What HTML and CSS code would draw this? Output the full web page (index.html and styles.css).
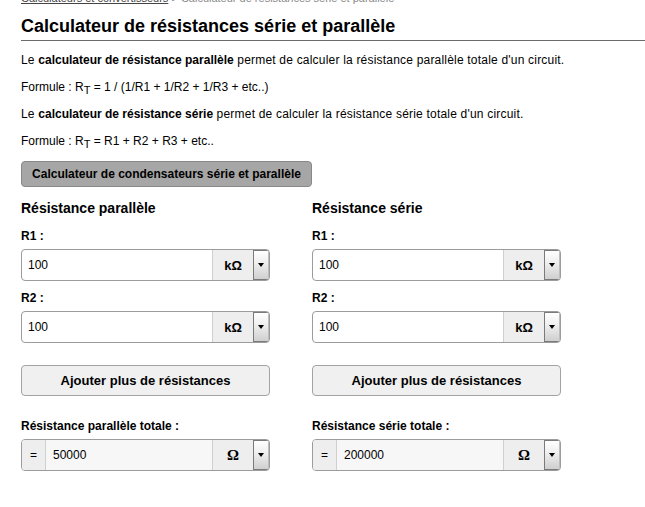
FILE: index.html
```html
<!DOCTYPE html>
<html lang="fr">
<head>
<meta charset="utf-8">
<title>Calculateur de résistances série et parallèle</title>
<link rel="stylesheet" href="styles.css">
</head>
<body>
<div class="page">
  <div class="crumbs"><a href="#">Calculateurs et convertisseurs</a> &gt; Calculateur de résistances série et parallèle</div>
  <h1>Calculateur de résistances série et parallèle</h1>
  <p class="desc">Le <b>calculateur de résistance parallèle</b> permet de calculer la résistance parallèle totale d'un circuit.</p>
  <p>Formule : R<sub>T</sub> = 1 / (1/R1 + 1/R2 + 1/R3 + etc..)</p>
  <p class="desc">Le <b>calculateur de résistance série</b> permet de calculer la résistance série totale d'un circuit.</p>
  <p>Formule : R<sub>T</sub> = R1 + R2 + R3 + etc..</p>
  <button class="btn-cap" type="button">Calculateur de condensateurs série et parallèle</button>
  <div class="cols">
    <div class="col">
      <h2>Résistance parallèle</h2>
      <div class="label">R1 :</div>
      <div class="group"><span class="val">100</span><span class="unit">kΩ</span><span class="drop"><i class="tri"></i></span></div>
      <div class="label">R2 :</div>
      <div class="group"><span class="val">100</span><span class="unit">kΩ</span><span class="drop"><i class="tri"></i></span></div>
      <button class="btn-add" type="button">Ajouter plus de résistances</button>
      <div class="label total">Résistance parallèle totale :</div>
      <div class="group result"><span class="eq">=</span><span class="val">50000</span><span class="unit ohm">Ω</span><span class="drop"><i class="tri"></i></span></div>
    </div>
    <div class="col">
      <h2>Résistance série</h2>
      <div class="label">R1 :</div>
      <div class="group"><span class="val">100</span><span class="unit">kΩ</span><span class="drop"><i class="tri"></i></span></div>
      <div class="label">R2 :</div>
      <div class="group"><span class="val">100</span><span class="unit">kΩ</span><span class="drop"><i class="tri"></i></span></div>
      <button class="btn-add" type="button">Ajouter plus de résistances</button>
      <div class="label total">Résistance série totale :</div>
      <div class="group result"><span class="eq">=</span><span class="val">200000</span><span class="unit ohm">Ω</span><span class="drop"><i class="tri"></i></span></div>
    </div>
  </div>
</div>
</body>
</html>
```
FILE: styles.css
```css
html, body {
  margin: 0;
  padding: 0;
  background: #fff;
}
body {
  font-family: "Liberation Sans", Arial, sans-serif;
  font-size: 12px;
  color: #000;
  overflow: hidden;
}
.page {
  padding-left: 21px;
}
.crumbs {
  font-size: 11px;
  line-height: 13px;
  margin-top: -8px;
  color: #8a8a8a;
  white-space: nowrap;
}
.crumbs a {
  color: #444;
  text-decoration: underline;
}
h1 {
  font-size: 18px;
  line-height: 24px;
  margin: 9px 0 0;
  padding-bottom: 2px;
  border-bottom: 1px solid #6b6b6b;
}
p {
  margin: 12px 0;
  line-height: 15px;
}
p.desc {
  letter-spacing: 0.2px;
}
p.desc b {
  letter-spacing: 0;
}
sub {
  font-size: 11px;
  vertical-align: -3px;
  line-height: 0;
}
button {
  font-family: "Liberation Sans", Arial, sans-serif;
  color: #000;
  box-sizing: border-box;
  padding: 0;
  cursor: pointer;
}
.btn-cap {
  display: block;
  width: 291px;
  height: 26px;
  background: #a6a6a6;
  border: 1px solid #888;
  border-radius: 4px;
  font-weight: bold;
  font-size: 12px;
}
.cols {
  display: grid;
  grid-template-columns: 291px 291px;
}
h2 {
  font-size: 14px;
  line-height: 17px;
  margin: 13px 0 12px;
}
.label {
  font-weight: bold;
  line-height: 15px;
  margin-bottom: 5px;
}
.label.total {
  margin-top: 23px;
}
.group {
  display: flex;
  width: 249px;
  height: 32px;
  box-sizing: border-box;
  border: 1px solid #9c9c9c;
  border-radius: 4px;
  overflow: hidden;
  margin-bottom: 10px;
  background: #fff;
}
.val {
  flex: 1;
  display: flex;
  align-items: center;
  padding-left: 6px;
}
.unit {
  width: 40px;
  display: flex;
  align-items: center;
  justify-content: center;
  background: #eee;
  border-left: 1px solid #cfcfcf;
  font-weight: bold;
  font-size: 13px;
}
.unit.ohm {
  font-family: "Liberation Serif", "Times New Roman", serif;
  font-size: 15px;
}
.drop {
  width: 16px;
  box-sizing: border-box;
  border: 1px solid #7a7a7a;
  border-right-color: #bdbdbd;
  background: linear-gradient(#ffffff, #f0f0f0 40%, #cfcfcf);
  display: flex;
  align-items: center;
  justify-content: center;
}
.tri {
  width: 0;
  height: 0;
  border-left: 3.5px solid transparent;
  border-right: 3.5px solid transparent;
  border-top: 4px solid #000;
}
.btn-add {
  display: block;
  width: 249px;
  height: 31px;
  margin-top: 22px;
  background: #f0f0f0;
  border: 1px solid #a3a3a3;
  border-radius: 4px;
  font-weight: bold;
  font-size: 13px;
}
.result .eq {
  width: 23px;
  display: flex;
  align-items: center;
  justify-content: center;
  background: #eee;
  border-right: 1px solid #cfcfcf;
  font-size: 12px;
}
.result .val {
  background: #f7f7f7;
  padding-left: 7px;
}
```
